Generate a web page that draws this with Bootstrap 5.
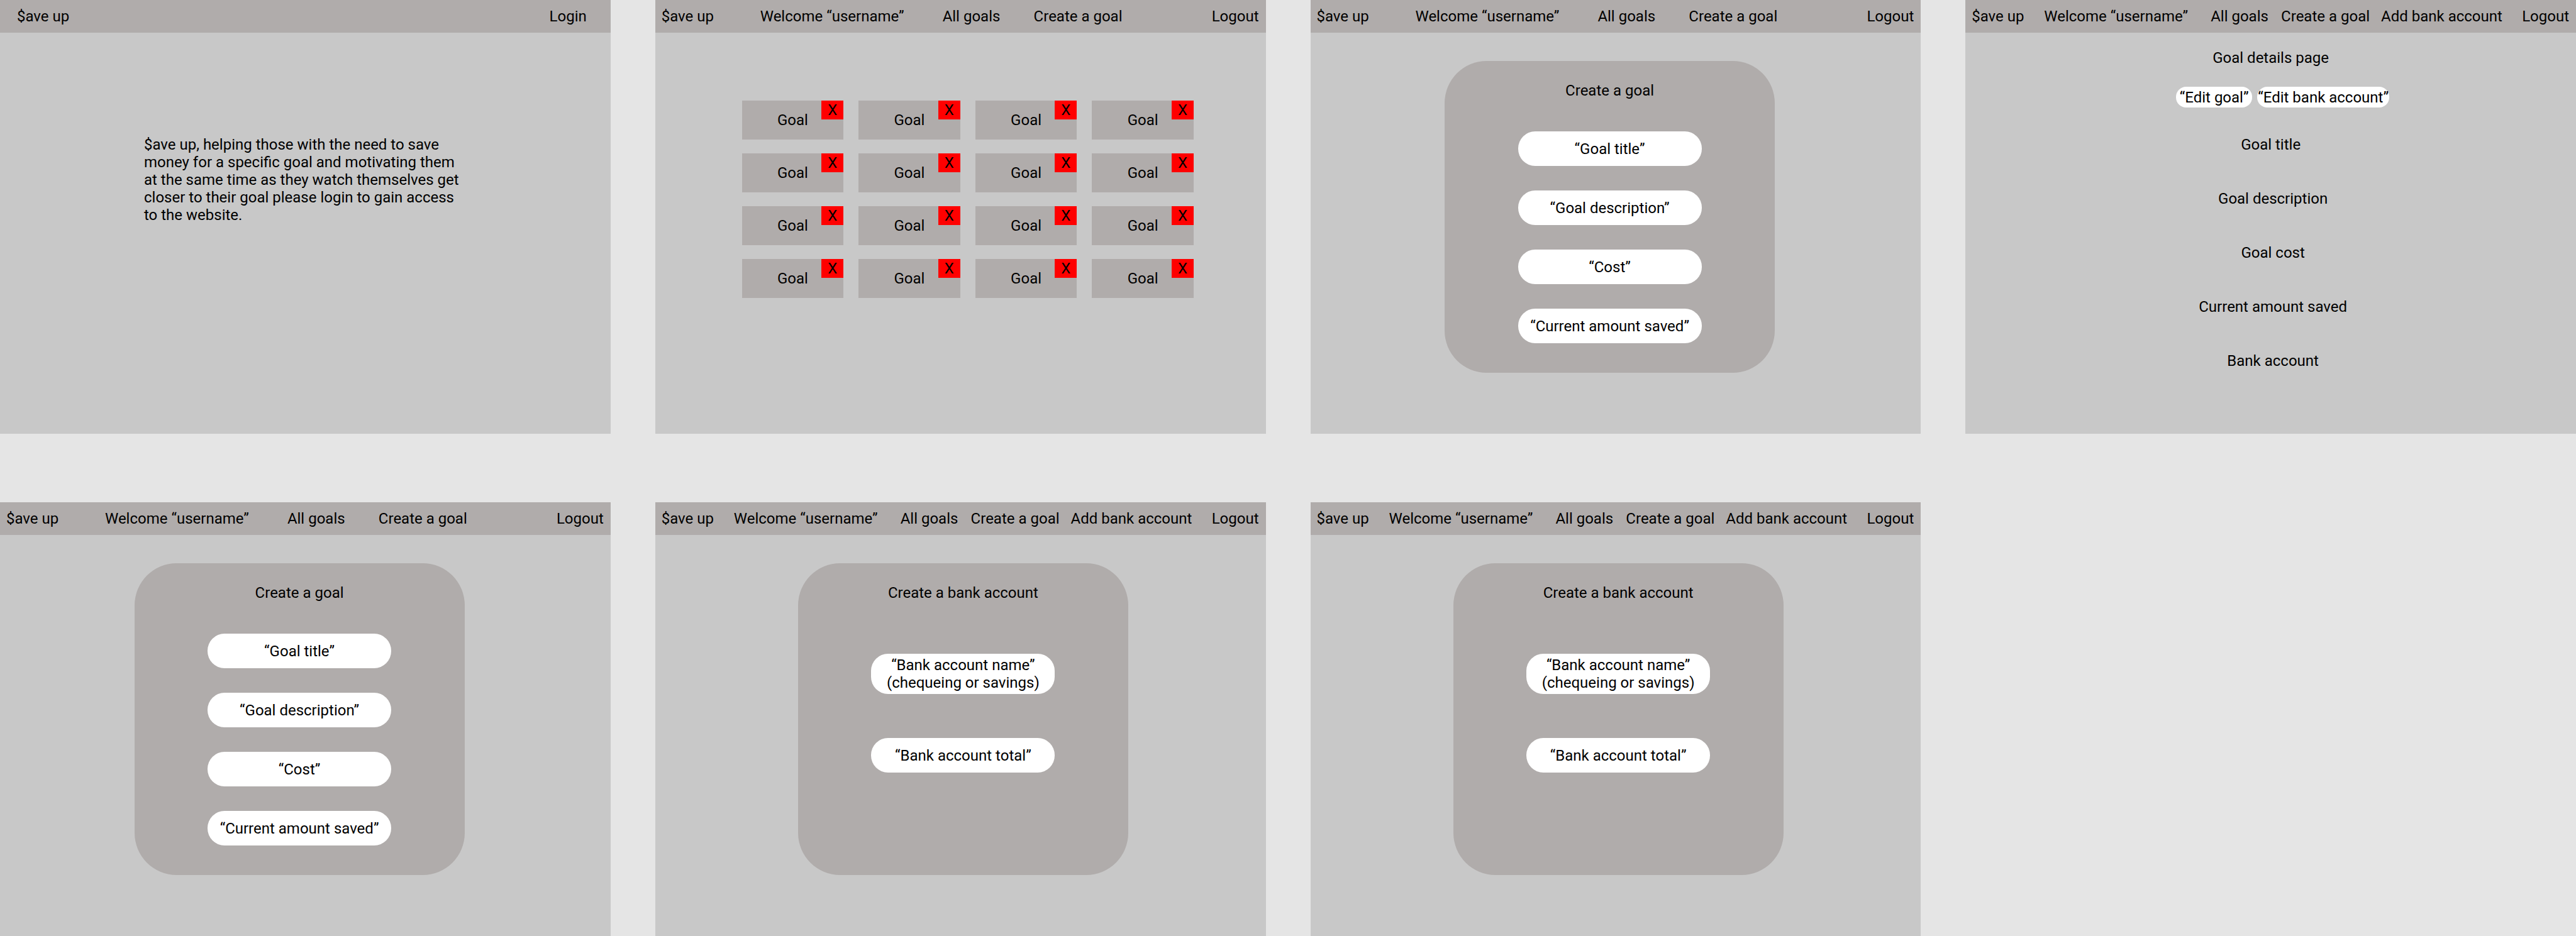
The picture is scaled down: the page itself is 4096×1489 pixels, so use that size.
<!DOCTYPE html>
<html lang="en">
<head>
<meta charset="utf-8">
<meta name="viewport" content="width=device-width, initial-scale=1">
<title>$ave up wireframes</title>
<link rel="stylesheet" href="https://cdn.jsdelivr.net/npm/bootstrap@5.3.0/dist/css/bootstrap.min.css">
<style>
  :root { --board: #e5e5e5; --screen: #c8c8c8; --bar: #b0acab; }
  body { background: var(--board); color: #000; font-family: Roboto, sans-serif; font-size: 24px; line-height: 28px; }
  a, a:hover { color: #000; text-decoration: none; white-space: nowrap; }
  h1, h2 { font-size: 24px; line-height: 28px; font-weight: 400; margin: 0; }
  .board { grid-template-columns: repeat(auto-fill, minmax(900px, 1fr)); column-gap: 71px; row-gap: 109px; }
  .screen { background: var(--screen); min-height: 690px; }

  /* top bars */
  .topbar { background: var(--bar); height: 52px; padding: 0 11px 0 10px; }
  .topbar-out { padding: 0 38px 0 27px; }
  .topbar-goals { grid-template-columns: 157fr 290fr 145fr 280fr 78fr; }
  .topbar-bank { grid-template-columns: 115fr 265fr 112fr 159fr 221fr 78fr; }

  .intro { margin: 164px 0 0 229px; max-width: 509px; }

  /* goal tiles */
  .goals { grid-template-columns: repeat(4, 1fr); column-gap: 24px; row-gap: 22px; padding: 108px 11.8% 0 14.2%; }
  .goal { background: var(--bar); height: 62px; }
  .goal-del, .goal-del:hover { width: 35px; height: 30px; background: #f00; color: #000; font-size: 24px; line-height: 28px; }

  /* form panels */
  .panel { background: var(--bar); width: 525px; min-height: 496px; margin-top: 45px; padding-top: 33px; border-radius: 67px; }
  .panel-goal { margin-left: 22%; }
  .panel-bank { margin-left: 23.4%; }
  .panel-goal .fields { margin-top: 51px; gap: 39px; }
  .panel-bank .fields { margin-top: 83px; gap: 70px; }
  .pill { width: 292px; height: 55px; border: 0; border-radius: 27px; background: #fff; color: #000; text-align: center; padding: 0; line-height: 28px; }
  .pill::placeholder { color: #000; opacity: 1; }
  .pill-tall { height: 64px; padding: 4px 0; resize: none; overflow: hidden; }

  /* goal details */
  .details { padding-top: 26px; }
  .edits { margin: 32px 0 45px 34.5%; gap: 8px; }
  .edit { height: 33px; border-radius: 16px; background: #fff; color: #000; white-space: nowrap; }
  .edit-goal { width: 121px; }
  .edit-bank { width: 210px; }
  .facts { gap: 58px; margin-top: 58px; padding-left: 7px; }
</style>
<script src="https://cdn.jsdelivr.net/npm/bootstrap@5.3.0/dist/js/bootstrap.bundle.min.js"></script>
</head>
<body>
<main class="board d-grid">

  <section class="screen">
    <nav class="topbar topbar-out d-flex align-items-center justify-content-between">
      <a href="#">$ave up</a><a href="#">Login</a>
    </nav>
    <p class="intro mb-0">$ave up, helping those with the need to save money for a specific goal and motivating them at the same time as they watch themselves get closer to their goal please login to gain access to the website.</p>
  </section>

  <section class="screen">
    <nav class="topbar topbar-goals d-grid align-items-center">
      <a href="#">$ave up</a><span>Welcome “username”</span><a href="#">All goals</a><a href="#">Create a goal</a><a href="#" class="text-end">Logout</a>
    </nav>
    <div class="goals d-grid">
      <div class="goal position-relative d-flex align-items-center justify-content-center">Goal<button type="button" class="goal-del btn border-0 rounded-0 p-0 position-absolute top-0 end-0">X</button></div>
      <div class="goal position-relative d-flex align-items-center justify-content-center">Goal<button type="button" class="goal-del btn border-0 rounded-0 p-0 position-absolute top-0 end-0">X</button></div>
      <div class="goal position-relative d-flex align-items-center justify-content-center">Goal<button type="button" class="goal-del btn border-0 rounded-0 p-0 position-absolute top-0 end-0">X</button></div>
      <div class="goal position-relative d-flex align-items-center justify-content-center">Goal<button type="button" class="goal-del btn border-0 rounded-0 p-0 position-absolute top-0 end-0">X</button></div>
      <div class="goal position-relative d-flex align-items-center justify-content-center">Goal<button type="button" class="goal-del btn border-0 rounded-0 p-0 position-absolute top-0 end-0">X</button></div>
      <div class="goal position-relative d-flex align-items-center justify-content-center">Goal<button type="button" class="goal-del btn border-0 rounded-0 p-0 position-absolute top-0 end-0">X</button></div>
      <div class="goal position-relative d-flex align-items-center justify-content-center">Goal<button type="button" class="goal-del btn border-0 rounded-0 p-0 position-absolute top-0 end-0">X</button></div>
      <div class="goal position-relative d-flex align-items-center justify-content-center">Goal<button type="button" class="goal-del btn border-0 rounded-0 p-0 position-absolute top-0 end-0">X</button></div>
      <div class="goal position-relative d-flex align-items-center justify-content-center">Goal<button type="button" class="goal-del btn border-0 rounded-0 p-0 position-absolute top-0 end-0">X</button></div>
      <div class="goal position-relative d-flex align-items-center justify-content-center">Goal<button type="button" class="goal-del btn border-0 rounded-0 p-0 position-absolute top-0 end-0">X</button></div>
      <div class="goal position-relative d-flex align-items-center justify-content-center">Goal<button type="button" class="goal-del btn border-0 rounded-0 p-0 position-absolute top-0 end-0">X</button></div>
      <div class="goal position-relative d-flex align-items-center justify-content-center">Goal<button type="button" class="goal-del btn border-0 rounded-0 p-0 position-absolute top-0 end-0">X</button></div>
      <div class="goal position-relative d-flex align-items-center justify-content-center">Goal<button type="button" class="goal-del btn border-0 rounded-0 p-0 position-absolute top-0 end-0">X</button></div>
      <div class="goal position-relative d-flex align-items-center justify-content-center">Goal<button type="button" class="goal-del btn border-0 rounded-0 p-0 position-absolute top-0 end-0">X</button></div>
      <div class="goal position-relative d-flex align-items-center justify-content-center">Goal<button type="button" class="goal-del btn border-0 rounded-0 p-0 position-absolute top-0 end-0">X</button></div>
      <div class="goal position-relative d-flex align-items-center justify-content-center">Goal<button type="button" class="goal-del btn border-0 rounded-0 p-0 position-absolute top-0 end-0">X</button></div>
    </div>
  </section>

  <section class="screen">
    <nav class="topbar topbar-goals d-grid align-items-center">
      <a href="#">$ave up</a><span>Welcome “username”</span><a href="#">All goals</a><a href="#">Create a goal</a><a href="#" class="text-end">Logout</a>
    </nav>
    <form class="panel panel-goal">
      <h2 class="text-center">Create a goal</h2>
      <div class="fields d-flex flex-column align-items-center">
        <input class="pill" type="text" aria-label="Goal title" placeholder="“Goal title”">
        <input class="pill" type="text" aria-label="Goal description" placeholder="“Goal description”">
        <input class="pill" type="text" aria-label="Cost" placeholder="“Cost”">
        <input class="pill" type="text" aria-label="Current amount saved" placeholder="“Current amount saved”">
      </div>
    </form>
  </section>

  <section class="screen">
    <nav class="topbar topbar-bank d-grid align-items-center">
      <a href="#">$ave up</a><span>Welcome “username”</span><a href="#">All goals</a><a href="#">Create a goal</a><a href="#">Add bank account</a><a href="#" class="text-end">Logout</a>
    </nav>
    <div class="details">
      <h1 class="text-center">Goal details page</h1>
      <div class="edits d-flex">
        <button type="button" class="edit edit-goal border-0 p-0">“Edit goal”</button>
        <button type="button" class="edit edit-bank border-0 p-0">“Edit bank account”</button>
      </div>
      <p class="text-center mb-0">Goal title</p>
      <div class="facts d-flex flex-column text-center">
        <div>Goal description</div>
        <div>Goal cost</div>
        <div>Current amount saved</div>
        <div>Bank account</div>
      </div>
    </div>
  </section>

  <section class="screen">
    <nav class="topbar topbar-goals d-grid align-items-center">
      <a href="#">$ave up</a><span>Welcome “username”</span><a href="#">All goals</a><a href="#">Create a goal</a><a href="#" class="text-end">Logout</a>
    </nav>
    <form class="panel panel-goal">
      <h2 class="text-center">Create a goal</h2>
      <div class="fields d-flex flex-column align-items-center">
        <input class="pill" type="text" aria-label="Goal title" placeholder="“Goal title”">
        <input class="pill" type="text" aria-label="Goal description" placeholder="“Goal description”">
        <input class="pill" type="text" aria-label="Cost" placeholder="“Cost”">
        <input class="pill" type="text" aria-label="Current amount saved" placeholder="“Current amount saved”">
      </div>
    </form>
  </section>

  <section class="screen">
    <nav class="topbar topbar-bank d-grid align-items-center">
      <a href="#">$ave up</a><span>Welcome “username”</span><a href="#">All goals</a><a href="#">Create a goal</a><a href="#">Add bank account</a><a href="#" class="text-end">Logout</a>
    </nav>
    <form class="panel panel-bank">
      <h2 class="text-center">Create a bank account</h2>
      <div class="fields d-flex flex-column align-items-center">
        <textarea class="pill pill-tall" rows="2" aria-label="Bank account name" placeholder="“Bank account name”&#10;(chequeing or savings)"></textarea>
        <input class="pill" type="text" aria-label="Bank account total" placeholder="“Bank account total”">
      </div>
    </form>
  </section>

  <section class="screen">
    <nav class="topbar topbar-bank d-grid align-items-center">
      <a href="#">$ave up</a><span>Welcome “username”</span><a href="#">All goals</a><a href="#">Create a goal</a><a href="#">Add bank account</a><a href="#" class="text-end">Logout</a>
    </nav>
    <form class="panel panel-bank">
      <h2 class="text-center">Create a bank account</h2>
      <div class="fields d-flex flex-column align-items-center">
        <textarea class="pill pill-tall" rows="2" aria-label="Bank account name" placeholder="“Bank account name”&#10;(chequeing or savings)"></textarea>
        <input class="pill" type="text" aria-label="Bank account total" placeholder="“Bank account total”">
      </div>
    </form>
  </section>

</main>
</body>
</html>
